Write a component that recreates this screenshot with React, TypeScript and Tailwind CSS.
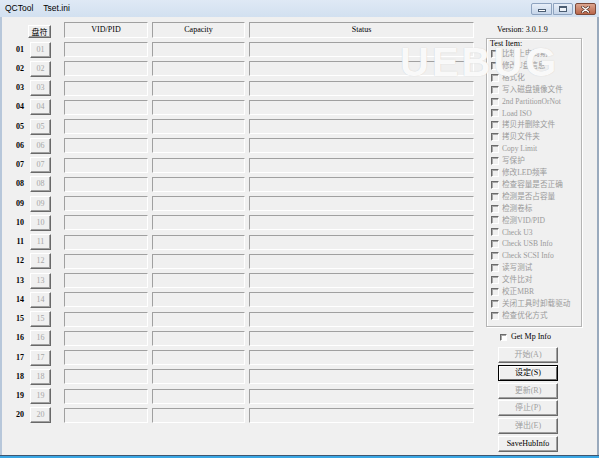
import React from 'react';

const rows = Array.from({ length: 20 }, (_, i) => String(i + 1).padStart(2, '0'));

const items = [
  '比较上电周期',
  '修改U盘信息',
  '格式化',
  '写入磁盘镜像文件',
  '2nd PartitionOrNot',
  'Load ISO',
  '拷贝并删除文件',
  '拷贝文件夹',
  'Copy Limit',
  '写保护',
  '修改LED频率',
  '检查容量是否正确',
  '检测是否占容量',
  '检测卷标',
  '检测VID/PID',
  'Check U3',
  'Check USB Info',
  'Check SCSI Info',
  '读写测试',
  '文件比对',
  '校正MBR',
  '关闭工具时卸载驱动',
  '检查优化方式',
];

const buttons = [
  { label: '开始(A)', enabled: false },
  { label: '设定(S)', enabled: true, isDefault: true },
  { label: '更新(R)', enabled: false },
  { label: '停止(P)', enabled: false },
  { label: '弹出(E)', enabled: false },
  { label: 'SaveHubInfo', enabled: true },
];

// sunken static box
const cell =
  'border border-t-[#a0a0a0] border-l-[#a0a0a0] border-b-white border-r-white bg-[#f0f0f0]';

// raised classic button
const raised =
  'border border-t-white border-l-white border-b-[#696969] border-r-[#696969] shadow-[inset_-1px_-1px_0_#a0a0a0] bg-[#f0f0f0]';

function TitleBar() {
  return (
    <div className="h-[17px] flex items-center bg-gradient-to-b from-[#dfe9f5] to-[#d2e0f0] font-['Liberation_Sans',sans-serif] text-[8.5px] text-black">
      <span className="ml-[5px]">QCTool</span>
      <span className="ml-[10px]">Tset.ini</span>
      <div className="ml-auto mr-[3px] flex items-start gap-[1px] self-start mt-[3px]">
        <div className="w-[21px] h-[12px] rounded-l-[2px] border border-[#8ea3bf] bg-gradient-to-b from-[#e8eff8] to-[#c6d5e9] flex items-end justify-center pb-[2px]">
          <div className="w-[8px] h-[3px] border border-[#4b5d72] bg-white" />
        </div>
        <div className="w-[20px] h-[12px] rounded-r-[2px] border border-[#8ea3bf] bg-gradient-to-b from-[#e8eff8] to-[#c6d5e9] flex items-center justify-center">
          <div className="w-[8px] h-[6px] border border-[#4b5d72] border-t-2 bg-white/60" />
        </div>
        <div className="ml-[1px] w-[21px] h-[12px] rounded-[2px] border border-[#7b4a3a] bg-gradient-to-b from-[#dca58f] to-[#b9664a] flex items-center justify-center">
          <svg width="9" height="7" viewBox="0 0 9 7">
            <path d="M1.5 1 L7.5 6 M7.5 1 L1.5 6" stroke="#4a2a20" strokeWidth="2.6" strokeLinecap="round" />
            <path d="M1.5 1 L7.5 6 M7.5 1 L1.5 6" stroke="#ffffff" strokeWidth="1.4" strokeLinecap="round" />
          </svg>
        </div>
      </div>
    </div>
  );
}

function Check({ disabled }: { disabled?: boolean }) {
  return (
    <div
      className={
        'shrink-0 border border-t-[#6a6a6a] border-l-[#6a6a6a] border-b-white border-r-white shadow-[inset_1px_1px_0_#a8a8a8] ' +
        (disabled ? 'w-[8px] h-[8px] bg-[#f0f0f0]' : 'w-[7px] h-[7px] bg-white')
      }
    />
  );
}

export default function App() {
  return (
    <div className="relative w-[599px] h-[458px] flex flex-col overflow-hidden bg-[#f0f0f0] font-['Liberation_Serif','Noto_Sans_CJK_SC',serif] text-[8px] leading-none text-black">
      <TitleBar />

      <div className="flex-1 flex border-l-2 border-r-2 border-l-[#b7c7da] border-r-[#9aaabd]">
        {/* drive grid */}
        <div className="flex flex-col pt-[5px]">
          <div className="flex h-[16px] items-start">
            <div className="w-[26px]" />
            <div className={raised + ' w-[23px] h-[13px] mt-[3px] flex items-center justify-center font-["Noto_Sans_CJK_SC",sans-serif] text-[8px]'}>
              盘符
            </div>
            <div className={cell + ' ml-[13px] w-[84px] h-[16px] flex items-center justify-center'}>VID/PID</div>
            <div className={cell + ' ml-[4px] w-[93px] h-[16px] flex items-center justify-center'}>Capacity</div>
            <div className={cell + ' ml-[4px] w-[225px] h-[16px] flex items-center justify-center'}>Status</div>
          </div>

          <div className="mt-[2px] flex flex-col">
            {rows.map((r) => (
              <div key={r} className="flex items-center h-[19.26px]">
                <div className="w-[28px] flex justify-end pr-[6px] font-bold text-[8px]">{r}</div>
                <div className={raised + ' w-[21px] h-[16px] flex items-center justify-center text-[#a6a6a6]'}>{r}</div>
                <div className={cell + ' ml-[13px] w-[84px] h-[15px]'} />
                <div className={cell + ' ml-[4px] w-[93px] h-[15px]'} />
                <div className={cell + ' ml-[4px] w-[225px] h-[15px]'} />
              </div>
            ))}
          </div>
        </div>

        {/* right panel */}
        <div className="ml-[12px] w-[96px] flex flex-col">
          <div className="mt-[8px] h-[10px] leading-[10px] pl-[11px]">Version: 3.0.1.9</div>

          <div className="mt-[3px] h-[289px] border border-[#b4b4b4] shadow-[inset_1px_1px_0_#ffffff,1px_1px_0_#ffffff] flex flex-col">
            <div className="h-[9px] leading-[9px] pl-[3px]">Test Item:</div>
            {items.map((t) => (
              <div key={t} className="h-[11.9px] flex items-center pl-[4px]">
                <Check disabled />
                <span className="ml-[3px] text-[7.6px] text-[#9a9a9a] whitespace-nowrap">{t}</span>
              </div>
            ))}
          </div>

          <div className="mt-[5px] h-[10px] flex items-center pl-[14px]">
            <Check />
            <span className="ml-[4px]">Get Mp Info</span>
          </div>

          <div className="mt-[5px] pl-[12px] flex flex-col gap-[1.8px]">
            {buttons.map((b) => (
              <div
                key={b.label}
                className={
                  'w-[60px] h-[16px] flex items-center justify-center ' +
                  (b.isDefault
                    ? 'border border-black bg-[#f0f0f0] shadow-[inset_1px_1px_0_#ffffff,inset_-1px_-1px_0_#696969]'
                    : raised) +
                  (b.enabled ? ' text-black' : ' text-[#a0a0a0]')
                }
              >
                {b.label}
              </div>
            ))}
          </div>
        </div>
      </div>

      <div className="h-[3px] border-t border-[#3e5670] bg-[#3aa6e4]" />

      {/* site watermark over the window */}
      <div className="absolute left-[400px] top-[42px] font-['Liberation_Sans',sans-serif] font-bold text-[40px] leading-none tracking-[3px] text-white/90 [text-shadow:0_0_1px_#c4c4c4] pointer-events-none">
        UEBUG
      </div>
    </div>
  );
}
